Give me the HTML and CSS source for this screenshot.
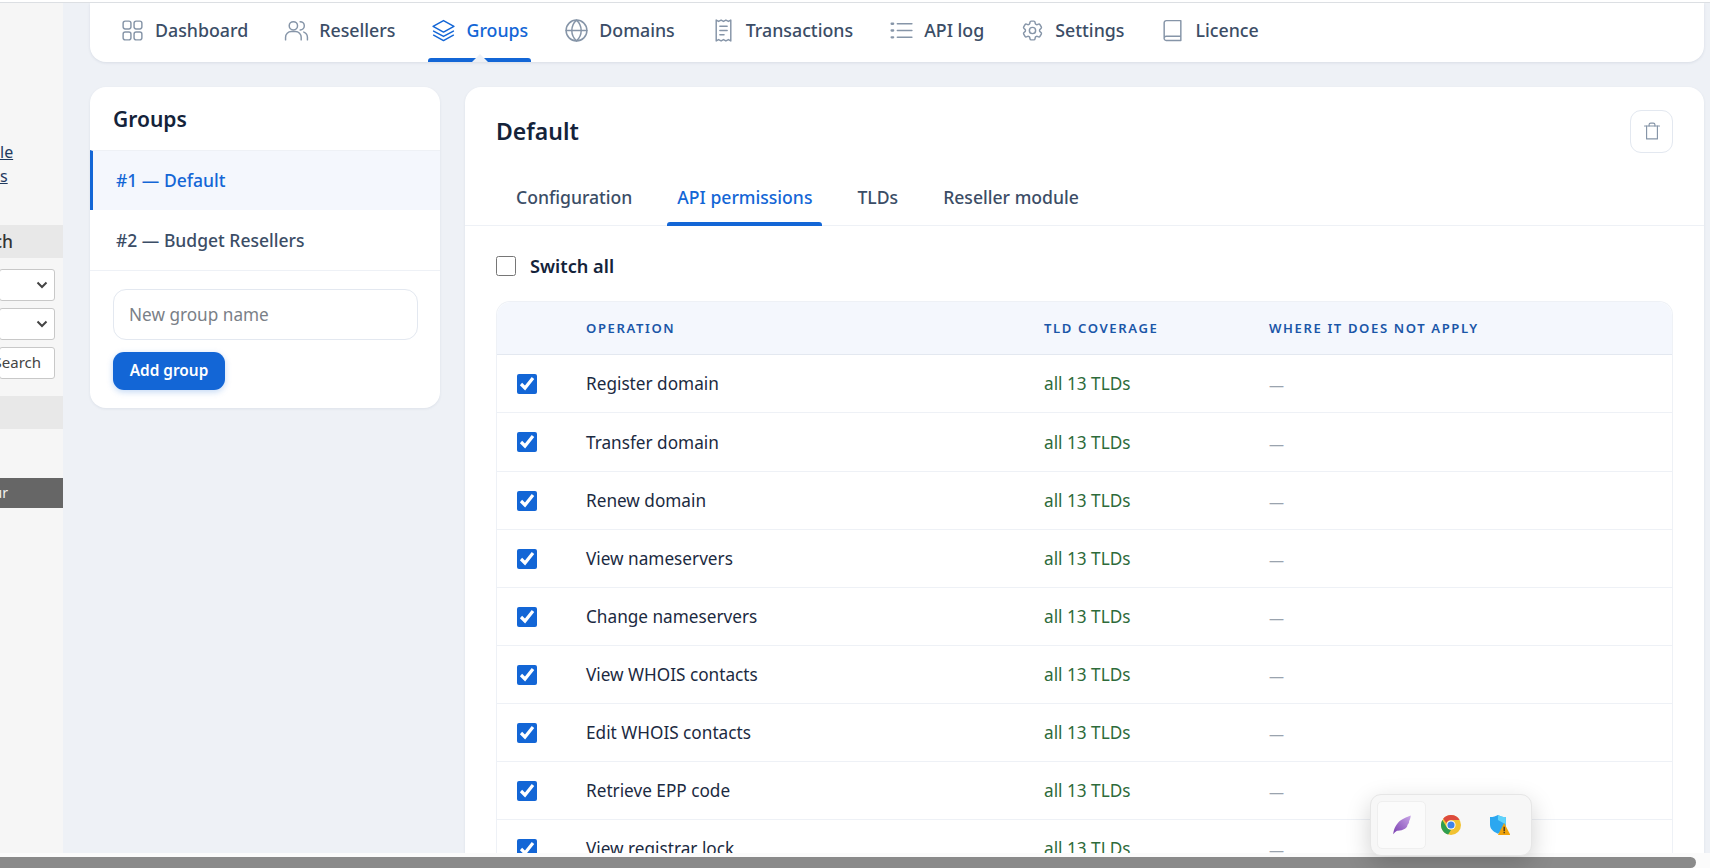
FILE: index.html
```html
<!DOCTYPE html>
<html lang="en">
<head>
<meta charset="utf-8">
<title>Groups</title>
<link rel="stylesheet" href="styles.css">
</head>
<body>
<div class="page">
  <aside class="legacy">
    <div class="legacy-links"><a href="#">le</a><a href="#">s</a></div>
    <div class="legacy-band first">Search</div>
    <div class="legacy-form">
      <div class="legacy-select"><svg viewBox="0 0 12 8" class="chev"><path d="M1.5 1.5 6 6l4.500-4.500"/></svg></div>
      <div class="legacy-select"><svg viewBox="0 0 12 8" class="chev"><path d="M1.5 1.5 6 6l4.500-4.500"/></svg></div>
      <div class="legacy-btn">Search</div>
    </div>
    <div class="legacy-band second"></div>
    <div class="legacy-dark">Your</div>
  </aside>
  <main class="content">
    <nav class="topnav">
      <a class="nav-item"><svg class="ico" viewBox="0 0 24 24"><rect x="3" y="3" width="7.500" height="7.500" rx="2"/><rect x="13.500" y="3" width="7.500" height="7.500" rx="2"/><rect x="3" y="13.500" width="7.500" height="7.500" rx="2"/><rect x="13.500" y="13.500" width="7.500" height="7.500" rx="2"/></svg>Dashboard</a>
      <a class="nav-item"><svg class="ico" viewBox="0 0 24 24"><circle cx="9" cy="7.500" r="4"/><path d="M1.500 21v-2.500a5.500 5.500 0 0 1 5.500-5.500h4a5.500 5.500 0 0 1 5.500 5.500V21"/><path d="M15.500 3.500a4 4 0 0 1 0 8"/><path d="M19 13.500a5.500 5.500 0 0 1 3.500 5V21"/></svg>Resellers</a>
      <a class="nav-item active"><svg class="ico" viewBox="0 0 24 24"><path d="M12 2.500 22 8l-10 5.500L2 8z"/><path d="m2.500 12.500 9.500 5.200 9.500-5.200"/><path d="m2.500 16.500 9.500 5.200 9.500-5.200"/></svg>Groups</a>
      <a class="nav-item"><svg class="ico" viewBox="0 0 24 24"><circle cx="12" cy="12" r="10"/><path d="M2 12h20"/><path d="M12 2c3 2.700 4.500 6 4.500 10s-1.500 7.300-4.500 10c-3-2.700-4.500-6-4.500-10S9 4.700 12 2z"/></svg>Domains</a>
      <a class="nav-item"><svg class="ico" viewBox="0 0 24 24"><path d="M5 2l2.300 1.300L9.700 2 12 3.300 14.300 2l2.400 1.300L19 2v20l-2.300-1.300-2.400 1.300-2.300-1.300L9.700 22l-2.400-1.300L5 22z"/><path d="M8.500 8h7M8.500 12h7M8.500 16h4"/></svg>Transactions</a>
      <a class="nav-item"><svg class="ico" viewBox="0 0 24 24"><path d="M8 5.500h14M8 12h14M8 18.500h14"/><path d="M2.500 5.500h1.500M2.500 12h1.500M2.500 18.500h1.500" class="thick"/></svg>API log</a>
      <a class="nav-item"><svg class="ico" viewBox="0 0 24 24"><path d="M9.594 3.94c.09-.542.56-.94 1.11-.94h2.593c.55 0 1.02.398 1.11.94l.213 1.281c.063.374.313.686.645.87.074.04.147.083.22.127.325.196.72.257 1.075.124l1.217-.456a1.125 1.125 0 0 1 1.37.49l1.296 2.247a1.125 1.125 0 0 1-.26 1.431l-1.003.827c-.293.241-.438.613-.43.992a7.723 7.723 0 0 1 0 .255c-.008.378.137.75.43.991l1.004.827c.424.35.534.955.26 1.43l-1.298 2.247a1.125 1.125 0 0 1-1.369.491l-1.217-.456c-.355-.133-.75-.072-1.076.124a6.47 6.47 0 0 1-.22.128c-.331.183-.581.495-.644.869l-.213 1.281c-.09.543-.56.94-1.11.94h-2.594c-.55 0-1.019-.398-1.11-.94l-.213-1.281c-.062-.374-.312-.686-.644-.87a6.52 6.52 0 0 1-.22-.127c-.325-.196-.72-.257-1.076-.124l-1.217.456a1.125 1.125 0 0 1-1.369-.49l-1.297-2.247a1.125 1.125 0 0 1 .26-1.431l1.004-.827c.292-.24.437-.613.43-.991a6.932 6.932 0 0 1 0-.255c.007-.38-.138-.751-.43-.992l-1.004-.827a1.125 1.125 0 0 1-.26-1.43l1.297-2.247a1.125 1.125 0 0 1 1.37-.491l1.216.456c.356.133.751.072 1.076-.124.072-.044.146-.086.22-.128.332-.183.582-.495.644-.869l.214-1.28Z"/><circle cx="12" cy="12" r="3"/></svg>Settings</a>
      <a class="nav-item"><svg class="ico" viewBox="0 0 24 24"><path d="M4 19V4.500A2 2 0 0 1 6 2.500h14v19H6a2 2 0 0 1-2-2.500 2 2 0 0 1 2-1.500h14"/></svg>Licence</a>
    </nav>
    <div class="columns">
      <section class="card groups">
        <h2 class="groups-title">Groups</h2>
        <a class="group-item current">#1 — Default</a>
        <a class="group-item">#2 — Budget Resellers</a>
        <form class="group-form">
          <input class="group-input" type="text" placeholder="New group name">
          <button class="btn-primary" type="button">Add group</button>
        </form>
      </section>
      <section class="card detail">
        <header class="detail-head">
          <h1 class="detail-title">Default</h1>
          <button class="icon-btn" type="button" aria-label="Delete"><svg class="ico trash" viewBox="0 0 24 24"><path d="M3 6h18"/><path d="M8.500 6V4.500A2 2 0 0 1 10.500 2.500h3a2 2 0 0 1 2 2V6"/><path d="M5.500 6v15.500h13V6"/></svg></button>
        </header>
        <div class="tabs">
          <a class="tab">Configuration</a>
          <a class="tab on">API permissions</a>
          <a class="tab">TLDs</a>
          <a class="tab">Reseller module</a>
        </div>
        <div class="detail-body">
          <label class="switch-all"><input type="checkbox" class="chk">Switch all</label>
          <table class="perm">
            <thead>
              <tr><th class="c1"></th><th class="c2">Operation</th><th class="c3">TLD coverage</th><th>Where it does not apply</th></tr>
            </thead>
            <tbody>
              <tr><td class="c1"><input type="checkbox" class="chk" checked></td><td>Register domain</td><td class="cov">all 13 TLDs</td><td class="na">—</td></tr>
              <tr><td class="c1"><input type="checkbox" class="chk" checked></td><td>Transfer domain</td><td class="cov">all 13 TLDs</td><td class="na">—</td></tr>
              <tr><td class="c1"><input type="checkbox" class="chk" checked></td><td>Renew domain</td><td class="cov">all 13 TLDs</td><td class="na">—</td></tr>
              <tr><td class="c1"><input type="checkbox" class="chk" checked></td><td>View nameservers</td><td class="cov">all 13 TLDs</td><td class="na">—</td></tr>
              <tr><td class="c1"><input type="checkbox" class="chk" checked></td><td>Change nameservers</td><td class="cov">all 13 TLDs</td><td class="na">—</td></tr>
              <tr><td class="c1"><input type="checkbox" class="chk" checked></td><td>View WHOIS contacts</td><td class="cov">all 13 TLDs</td><td class="na">—</td></tr>
              <tr><td class="c1"><input type="checkbox" class="chk" checked></td><td>Edit WHOIS contacts</td><td class="cov">all 13 TLDs</td><td class="na">—</td></tr>
              <tr><td class="c1"><input type="checkbox" class="chk" checked></td><td>Retrieve EPP code</td><td class="cov">all 13 TLDs</td><td class="na">—</td></tr>
              <tr><td class="c1"><input type="checkbox" class="chk" checked></td><td>View registrar lock</td><td class="cov">all 13 TLDs</td><td class="na">—</td></tr>
            </tbody>
          </table>
        </div>
      </section>
    </div>
  </main>
</div>
<div class="hscroll"><div class="hscroll-thumb"></div></div>
<div class="tray">
  <div class="tray-cell sel">
    <svg viewBox="0 0 24 24" class="tray-ico"><defs><linearGradient id="fe" x1="0" y1="1" x2="1" y2="0"><stop offset="0" stop-color="#7a3fb0"/><stop offset="1" stop-color="#c9a6e8"/></linearGradient></defs><path d="M1.500 23C2 17 5 10 11 6c3.500-2.300 7.500-4 11.500-5.500-.3 3-1 5-2 7 .3 1.200-.5 3-2 4.500.2 1.800-1.200 3.500-3 4.500-2.800 1.700-6 2.500-9.500 2.300-1.800 1.200-3.200 2.500-4.500 4.200z" fill="url(#fe)"/></svg>
  </div>
  <div class="tray-cell">
    <svg viewBox="0 0 24 24" class="tray-ico"><circle cx="12" cy="12" r="12" fill="#f1c232"/><path d="M12 0a12 12 0 0 1 10.400 6H12a6 6 0 0 0-5.500 3.600L2.600 4.400A12 12 0 0 1 12 0z" fill="#dd4b3e"/><path d="M1.600 6 7 15a6 6 0 0 0 5 3l-3.400 5.500A12 12 0 0 1 1.600 6z" fill="#2f9e4f"/><circle cx="12" cy="12" r="5.500" fill="#fff"/><circle cx="12" cy="12" r="4.300" fill="#3f83ea"/></svg>
  </div>
  <div class="tray-cell">
    <svg viewBox="0 0 24 24" class="tray-ico"><path d="M0 2.500C4 2.500 7 1.500 9.500 0 12 1.500 15 2.500 19 2.500v9c0 5-3.500 8.500-9.500 11C3.500 20 0 16.500 0 11.500z" fill="#2ba7f0"/><path d="M9.500 0C12 1.500 15 2.500 19 2.500v9L9.500 6z" fill="#5fd3fb"/><path d="M17 9.500 24.500 24h-15z" fill="#f0a30a"/><path d="M16.300 14h1.400v5.500h-1.400zM16.300 20.500h1.400V22h-1.400z" fill="#222"/></svg>
  </div>
</div>
</body>
</html>
```
FILE: styles.css
```css
* { box-sizing: border-box; }
html, body { margin: 0; height: 100%; }
body {
  width: 1710px;
  height: 868px;
  overflow: hidden;
  position: relative;
  display: flex;
  flex-direction: column;
  background: #fff;
  font-family: "Noto Sans", "Open Sans", sans-serif;
  color: #1b2a41;
}
.page {
  height: 853px;
  margin-top: 2px;
  border-top: 1px solid #dcdfe3;
  display: flex;
  overflow: hidden;
  background: #eef1f6;
}

/* clipped legacy panel on the left */
.legacy {
  width: 63px;
  flex: none;
  background: #f6f6f6;
  display: flex;
  flex-direction: column;
  color: #333;
  font-size: 14px;
}
.legacy-links {
  display: flex;
  flex-direction: column;
  margin-top: 137px;
  height: 85px;
  font-size: 16px;
  line-height: 24px;
}
.legacy-links a { color: #1f3a5f; text-decoration: underline; }
.legacy-band {
  height: 33px;
  background: #e8e8e8;
  font-size: 17.500px;
  line-height: 32px;
  font-weight: 500;
  display: flex;
  justify-content: flex-end;
  padding-right: 50px;
  white-space: nowrap;
}
.legacy-form {
  display: flex;
  flex-direction: column;
  gap: 7px;
  margin-top: 11px;
  height: 127px;
}
.legacy-select, .legacy-btn {
  width: 56px;
  height: 32px;
  margin-left: -1px;
  border: 1px solid #c8c8c8;
  border-radius: 3px;
  background: #fff;
  display: flex;
  align-items: center;
  justify-content: flex-end;
}
.legacy-select { padding-right: 6px; }
.legacy-btn { padding: 0 13px 2px 0; font-size: 15px; color: #444; white-space: nowrap; }
.chev { width: 12px; height: 8px; fill: none; stroke: #444; stroke-width: 2; }
.legacy-band.second { margin-top: 0; }
.legacy-dark {
  margin-top: 49px;
  height: 30px;
  background: #666;
  color: #f2f2f2;
  font-size: 14px;
  line-height: 29px;
  display: flex;
  justify-content: flex-end;
  padding-right: 55px;
  white-space: nowrap;
}

.content {
  width: 1641px;
  flex: none;
  padding-left: 27px;
  display: flex;
  flex-direction: column;
}

/* top navigation */
.topnav {
  height: 59px;
  flex: none;
  background: #fff;
  border-radius: 0 0 16px 16px;
  box-shadow: 0 1px 3px rgba(30, 50, 90, .1);
  display: flex;
  align-items: stretch;
  padding-left: 30px;
  gap: 36px;
}
.nav-item {
  position: relative;
  display: flex;
  align-items: center;
  gap: 10px;
  padding-bottom: 5px;
  font-size: 17.800px;
  font-weight: 500;
  color: #3b4d66;
  white-space: nowrap;
}
.ico {
  width: 25px;
  height: 25px;
  flex: none;
  fill: none;
  stroke: #8695a8;
  stroke-width: 1.400;
  stroke-linecap: round;
  stroke-linejoin: round;
}
.thick { stroke-width: 2.200; }
.nav-item.active { color: #1366d6; }
.nav-item.active .ico { stroke: #1366d6; }
.nav-item.active::after {
  content: "";
  position: absolute;
  left: -3px;
  right: -3px;
  bottom: 0;
  height: 4px;
  background: #1366d6;
  border-radius: 3px 3px 0 0;
}
.nav-item.active::before {
  content: "";
  position: absolute;
  left: 50%;
  bottom: 0;
  z-index: 1;
  margin-left: -8px;
  border: 8px solid transparent;
  border-top: 0;
  border-bottom: 8px solid #eef1f6;
}

/* columns */
.columns {
  flex: 1;
  min-height: 0;
  margin-top: 25px;
  display: flex;
  align-items: flex-start;
  gap: 25px;
}
.card {
  background: #fff;
  border-radius: 16px;
  box-shadow: 0 1px 3px rgba(30, 50, 90, .08);
}
.groups { width: 350px; flex: none; padding-bottom: 18px; }
.groups-title {
  margin: 0;
  height: 63px;
  padding: 1px 23px 0;
  font-size: 21px;
  line-height: 63px;
  font-weight: 600;
  color: #14233a;
}
.group-item {
  display: flex;
  align-items: center;
  height: 61px;
  padding-left: 26px;
  font-size: 17.500px;
  font-weight: 500;
  color: #3b4d66;
  border-bottom: 1px solid #eef1f6;
}
.group-item.current {
  height: 60px;
  padding-bottom: 1px;
  color: #1366d6;
  background: #f4f7fd;
  border-left: 3px solid #1366d6;
  padding-left: 23px;
  border-top: 1px solid #eef1f6;
  border-bottom: 0;
}
.group-form {
  padding: 18px 23px 0;
  display: flex;
  flex-direction: column;
  align-items: flex-start;
  gap: 12px;
}
.group-input {
  width: 305px;
  height: 51px;
  padding: 0 15px;
  border: 1px solid #e3e8f0;
  border-radius: 13px;
  font: 400 17.200px "Noto Sans", sans-serif;
  color: #1b2a41;
}
.group-input::placeholder { color: #7a7f87; opacity: 1; }
.btn-primary {
  width: 112px;
  height: 38px;
  padding: 0 0 2px;
  border: 0;
  border-radius: 11px;
  background: #1366d6;
  color: #fff;
  font: 600 15.400px "Noto Sans", sans-serif;
  box-shadow: 0 2px 6px rgba(19, 102, 214, .25);
}

.detail { flex: 1; min-width: 0; height: 800px; overflow: hidden; }
.detail-head {
  display: flex;
  align-items: center;
  justify-content: space-between;
  height: 88px;
  padding: 0 31px;
}
.detail-title { margin: 0; font-size: 23px; font-weight: 600; color: #14233a; }
.icon-btn {
  width: 43px;
  height: 43px;
  padding: 0;
  background: #fff;
  border: 1px solid #e3e8f0;
  border-radius: 11px;
  display: flex;
  align-items: center;
  justify-content: center;
}
.trash { width: 20px; height: 20px; }
.tabs {
  display: flex;
  gap: 25px;
  height: 51px;
  padding-left: 41px;
  border-bottom: 1px solid #eef1f6;
}
.tab {
  position: relative;
  padding: 0 10px 6px;
  display: flex;
  align-items: center;
  font-size: 17.600px;
  font-weight: 500;
  color: #3b4d66;
}
.tab.on { color: #1366d6; }
.tab.on::after {
  content: "";
  position: absolute;
  left: 0;
  right: 0;
  bottom: -1px;
  height: 4px;
  background: #1366d6;
  border-radius: 3px 3px 0 0;
}
.detail-body { padding: 0 31px; }
.switch-all {
  display: flex;
  align-items: center;
  gap: 14px;
  height: 75px;
  padding-top: 4px;
  font-size: 18.200px;
  font-weight: 600;
  color: #14233a;
}
.chk { width: 20px; height: 20px; margin: 0; accent-color: #1366d6; flex: none; }
.perm {
  width: 100%;
  border-collapse: separate;
  border-spacing: 0;
  border: 1px solid #eef1f6;
  border-bottom: 0;
  border-radius: 14px 14px 0 0;
  table-layout: fixed;
  font-size: 17.200px;
}
.perm th {
  height: 53px;
  background: #f4f7fd;
  text-align: left;
  text-transform: uppercase;
  font-size: 13.100px;
  font-weight: 600;
  letter-spacing: 1.600px;
  color: #1a56a8;
  border-bottom: 1px solid #e3e8f0;
  padding: 0;
}
.perm th:first-child { border-top-left-radius: 14px; }
.perm th:last-child { border-top-right-radius: 14px; }
.perm td {
  height: 58px;
  padding: 0;
  border-bottom: 1px solid #eef1f6;
  color: #1b2a41;
}
.perm tbody tr:nth-child(2) td { height: 59px; }
.perm .c1 { width: 89px; padding-left: 20px; vertical-align: middle; line-height: 0; }
.perm .c2 { width: 458px; }
.perm .c3 { width: 225px; }
.perm .cov { color: #2e6b3a; }
.perm td.na { color: #9aa3ae; font-size: 15px; padding-top: 3px; }

/* bottom scrollbar */
.hscroll { height: 15px; flex: none; padding-top: 4px; background: #fbfbfb; }
.hscroll-thumb { width: 1696px; height: 11px; background: #8a8a8a; border-radius: 0 6px 6px 0; }

/* OS tray popup */
.tray {
  position: absolute;
  left: 1370px;
  top: 794px;
  width: 162px;
  height: 62px;
  padding: 6px;
  display: flex;
  background: #f7f7f7;
  border: 1px solid #e6e6e6;
  border-radius: 11px;
  box-shadow: 0 8px 24px rgba(0, 0, 0, .18);
}
.tray-cell {
  width: 50px;
  height: 48px;
  display: flex;
  align-items: center;
  justify-content: center;
  border: 1px solid transparent;
  border-radius: 5px;
}
.tray-cell.sel { background: #fbfbfb; border-color: #efefef; }
.tray-ico { width: 20px; height: 20px; }
```
